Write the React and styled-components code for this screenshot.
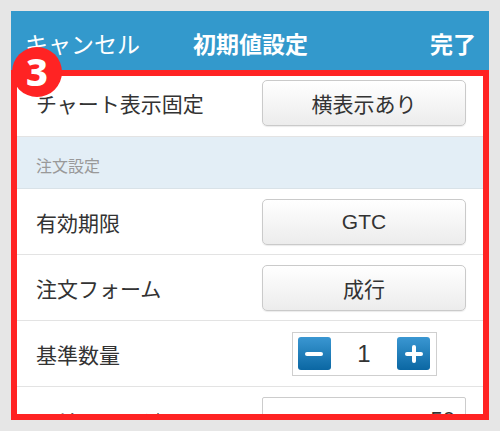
import React from 'react'
import styled, { createGlobalStyle } from 'styled-components'
import { Minus, Plus } from 'lucide-react'

const GlobalStyle = createGlobalStyle`
  html, body {
    margin: 0;
    background: #e6e6e6;
  }
  body {
    font-family: "Liberation Sans", "Noto Sans CJK JP", sans-serif;
  }
`

const Page = styled.div`
  padding: 11px;
  height: 431px;
  box-sizing: border-box;
`

const Phone = styled.div`
  position: relative;
  width: 478px;
  height: 409px;
  overflow: hidden;
  background: #fff;
  display: flex;
  flex-direction: column;
`

const Header = styled.header`
  flex: 0 0 59px;
  display: grid;
  grid-template-columns: 1fr auto 1fr;
  align-items: center;
  padding: 4px 13px 0 14px;
  box-sizing: border-box;
  background: #3399cc;
  color: #fff;
  font-size: 23px;
`

const HeaderButton = styled.span`
  font-weight: ${p => (p.bold ? 700 : 400)};
  justify-self: ${p => (p.right ? 'end' : 'start')};
`

const Title = styled.span`
  font-weight: 700;
`

const Body = styled.div`
  flex: 1;
  overflow: hidden;
`

const Row = styled.div`
  display: grid;
  grid-template-columns: 1fr 204px;
  align-items: center;
  height: ${p => (p.first ? 66 : 65)}px;
  padding: 0 23px 0 25px;
  border-bottom: 1px solid #e3e3e3;
  box-sizing: content-box;
`

const Label = styled.span`
  font-size: 21px;
  color: #333;
`

const Section = styled.div`
  height: 52px;
  display: flex;
  align-items: center;
  padding: 4px 0 0 25px;
  box-sizing: border-box;
  background: #e3eef6;
  border-bottom: 1px solid #d9e2e8;
  color: #999;
  font-size: 16px;
`

const SelectButton = styled.div`
  height: 46px;
  display: flex;
  align-items: center;
  justify-content: center;
  border: 1px solid #cacaca;
  border-radius: 5px;
  box-sizing: border-box;
  background: linear-gradient(#ffffff, #ececec);
  box-shadow: 0 1px 1px rgba(0, 0, 0, 0.08);
  color: #333;
  font-size: 21px;
`

const Stepper = styled.div`
  justify-self: center;
  width: 145px;
  height: 44px;
  display: flex;
  align-items: center;
  justify-content: space-between;
  padding: 0 5px;
  box-sizing: border-box;
  border: 1px solid #cfcfcf;
  background: #fff;
`

const StepButton = styled.div`
  width: 33px;
  height: 33px;
  display: flex;
  align-items: center;
  justify-content: center;
  border-radius: 3px;
  background: linear-gradient(#3a97d2, #0b67a3);
  color: #fff;
`

const StepValue = styled.span`
  font-size: 24px;
  color: #333;
`

const Field = styled.div`
  height: 46px;
  display: flex;
  align-items: center;
  justify-content: flex-end;
  padding-right: 10px;
  border: 1px solid #cccccc;
  border-radius: 2px;
  box-sizing: border-box;
  color: #333;
  font-size: 22px;
`

const Frame = styled.div`
  position: absolute;
  top: 59px;
  left: 0;
  right: 0;
  bottom: 0;
  border: 6px solid #ff2323;
  pointer-events: none;
`

const Badge = styled.div`
  position: absolute;
  top: 36px;
  left: 1px;
  width: 50px;
  height: 50px;
  border-radius: 50%;
  background: #ff2323;
  color: #fff;
  display: flex;
  align-items: center;
  justify-content: center;
  font-family: "Noto Sans", sans-serif;
  font-weight: 800;
  font-size: 38px;
  line-height: 1;
  padding-bottom: 3px;
  box-sizing: border-box;
`

const settings = [
  { label: '有効期限', value: 'GTC' },
  { label: '注文フォーム', value: '成行' },
]

const App = () => {
  return (
    <Page>
      <GlobalStyle />
      <Phone>
        <Header>
          <HeaderButton>キャンセル</HeaderButton>
          <Title>初期値設定</Title>
          <HeaderButton bold right>完了</HeaderButton>
        </Header>
        <Body>
          <Row first>
            <Label>チャート表示固定</Label>
            <SelectButton>横表示あり</SelectButton>
          </Row>
          <Section>注文設定</Section>
          {settings.map(s => (
            <Row key={s.label}>
              <Label>{s.label}</Label>
              <SelectButton>{s.value}</SelectButton>
            </Row>
          ))}
          <Row>
            <Label>基準数量</Label>
            <Stepper>
              <StepButton><Minus size={24} strokeWidth={4} /></StepButton>
              <StepValue>1</StepValue>
              <StepButton><Plus size={24} strokeWidth={4} /></StepButton>
            </Stepper>
          </Row>
          <Row>
            <Label>スリッページ</Label>
            <Field>50</Field>
          </Row>
        </Body>
        <Frame />
        <Badge>3</Badge>
      </Phone>
    </Page>
  )
}

export default App
